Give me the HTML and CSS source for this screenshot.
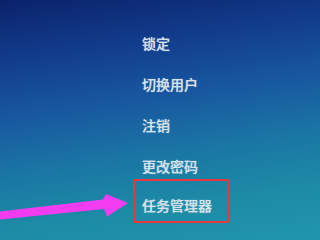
FILE: index.html
```html
<!DOCTYPE html>
<html lang="zh-CN">
<head>
<meta charset="utf-8">
<link rel="stylesheet" href="styles.css">
</head>
<body>
<div class="screen">
  <ul class="menu">
    <li class="item">锁定</li>
    <li class="item">切换用户</li>
    <li class="item">注销</li>
    <li class="item">更改密码</li>
    <li class="item task">任务管理器</li>
  </ul>
  <svg class="arrow" width="251" height="235" viewBox="0 0 251 235">
    <polygon points="0,211.5 103,199.5 106,194 128,203 107,216.5 104,209 0,219.5" fill="#f23cf0"/>
  </svg>
</div>
</body>
</html>
```
FILE: styles.css
```css
html, body {
  margin: 0;
  padding: 0;
  background: #1d8aa6;
}
.screen {
  position: relative;
  width: 100%;
  min-width: 251px;
  height: 100vh;
  min-height: 235px;
  overflow: hidden;
  background: linear-gradient(172deg, #0b226c 0%, #123d8c 22%, #1858a0 42%, #1a76a4 62%, #1d8aa6 80%, #2096ac 100%);
  font-family: "Noto Sans CJK SC", "Noto Sans", sans-serif;
}
.menu {
  list-style: none;
  margin: 0;
  padding: 35px 0 0 142px;
  display: flex;
  flex-direction: column;
  align-items: flex-start;
}
.item {
  font-size: 14px;
  line-height: 16px;
  font-weight: 500;
  color: #d6e2ea;
  margin-bottom: 25px;
  text-shadow: 0 0 1px rgba(230, 240, 245, 0.7);
}
.item.task {
  margin: -20px 0 0 -9px;
  width: 96px;
  box-sizing: border-box;
  border: 2px solid #e6383e;
  padding: 16px 7px 8px;
}
.arrow {
  position: absolute;
  left: 0;
  top: 0;
}
```
